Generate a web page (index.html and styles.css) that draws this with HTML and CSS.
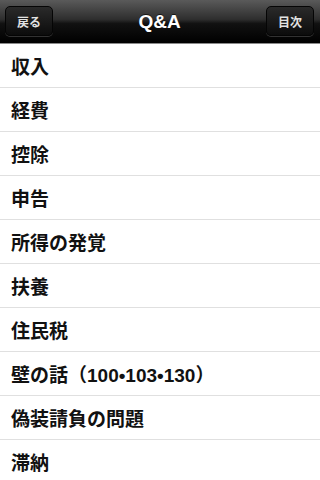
FILE: index.html
```html
<!DOCTYPE html>
<html lang="ja">
<head>
<meta charset="utf-8">
<link rel="stylesheet" href="styles.css">
</head>
<body>
<div class="nav">
  <div class="btn">戻る</div>
  <div class="title">Q&amp;A</div>
  <div class="btn">目次</div>
</div>
<ul class="list">
  <li>収入</li>
  <li>経費</li>
  <li>控除</li>
  <li>申告</li>
  <li>所得の発覚</li>
  <li>扶養</li>
  <li>住民税</li>
  <li>壁の話（100•103•130）</li>
  <li>偽装請負の問題</li>
  <li>滞納</li>
</ul>
</body>
</html>
```
FILE: styles.css
```css
html, body {
  margin: 0;
  padding: 0;
  background: #fff;
  width: 320px;
  height: 480px;
  overflow: hidden;
  font-family: "Liberation Sans", "Noto Sans CJK JP", sans-serif;
}
.nav {
  height: 43px;
  border-bottom: 1px solid #8a8a8a;
  background: linear-gradient(#5a5a5a 0%, #2e2e2e 45%, #111 55%, #000 100%);
  display: flex;
  align-items: center;
  justify-content: space-between;
  padding: 0 6px 0 5px;
  box-sizing: content-box;
}
.btn {
  width: 46px;
  height: 28px;
  border: 1px solid #050505;
  border-radius: 5px;
  background: linear-gradient(#2a2a2a, #0c0c0c);
  box-shadow: 0 1px 0 rgba(255,255,255,0.18);
  color: #e2e2e2;
  font-size: 12px;
  font-weight: bold;
  display: flex;
  align-items: center;
  justify-content: center;
  margin-top: -1px;
}
.title {
  color: #fff;
  font-size: 19px;
  font-weight: bold;
  text-shadow: 0 -1px 0 rgba(0,0,0,0.6);
}
.list {
  list-style: none;
  margin: 0;
  padding: 0;
}
.list li {
  height: 43px;
  border-bottom: 1px solid #e0e0e0;
  display: flex;
  align-items: center;
  padding-left: 11px;
  padding-bottom: 0;
  font-size: 19px;
  font-weight: bold;
  color: #111;
  box-sizing: content-box;
}
```
